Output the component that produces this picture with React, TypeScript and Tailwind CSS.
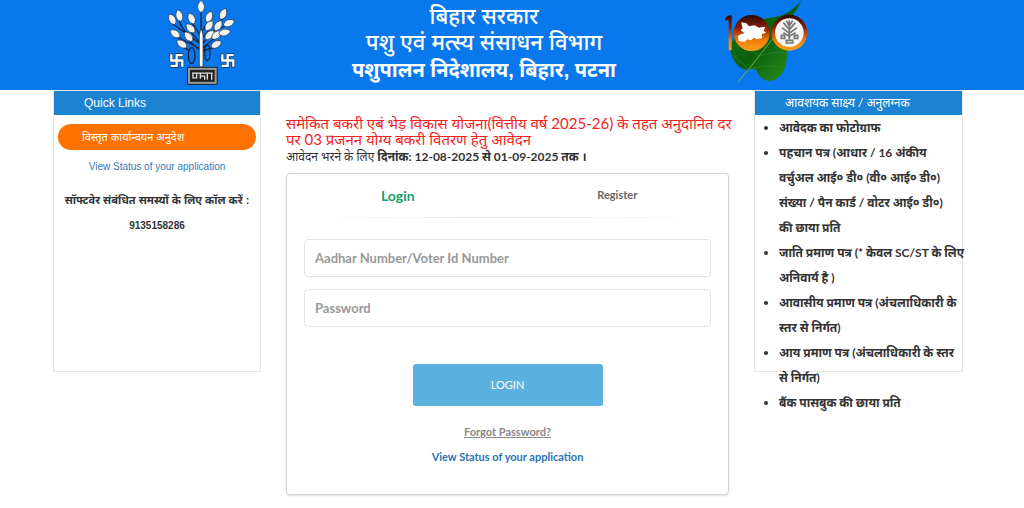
import React from 'react';

const LEAVES = [
  [152, 20, 0], [87, 47, -15], [66, 58, -28], [124, 56, -25], [176, 51, 22], [218, 42, 25],
  [235, 69, 68], [176, 77, 35], [203, 77, 35], [121, 85, -45], [75, 101, -55], [115, 110, -40],
  [177, 105, 45], [198, 105, 50], [222, 97, 78], [95, 132, -55], [197, 133, 60],
];

const DOCUMENTS = [
  ['आवेदक का फोटोग्राफ'],
  ['पहचान पत्र (आधार / 16 अंकीय', 'वर्चुअल आई० डी० (वी० आई० डी०)', 'संख्या / पैन कार्ड / वोटर आई० डी०)', 'की छाया प्रति'],
  ['जाति प्रमाण पत्र (* केवल SC/ST के लिए', 'अनिवार्य है )'],
  ['आवासीय प्रमाण पत्र (अंचलाधिकारी के', 'स्तर से निर्गत)'],
  ['आय प्रमाण पत्र (अंचलाधिकारी के स्तर', 'से निर्गत)'],
  ['बैंक पासबुक की छाया प्रति'],
];

const Swastik: React.FC<{ x: number }> = ({ x }) => (
  <g transform={`translate(${x} 160)`} fill="none">
    <path d="M5 0V21H38V42M40 5H21V37H2" stroke="#18304f" strokeWidth="11" />
    <path d="M5 2V21H38V40M39 5H21V37H3" stroke="#fff" strokeWidth="7" />
  </g>
);

const BiharEmblem: React.FC = () => (
  <svg viewBox="50 0 210 260" className="h-[87px] w-[70px]" aria-hidden="true">
    <g fill="none" stroke="#17263c" strokeWidth="4">
      <path d="M152 35V130M87 60Q90 90 148 130M66 70L104 98M124 68Q144 90 150 112M75 108L148 145M121 95L150 128M115 120L145 148" />
      <path d="M176 62L155 92M218 55Q190 95 155 132M235 73L190 92M176 90L155 114M222 100Q180 120 156 145M197 139L158 152M95 138L115 150" />
      <ellipse cx="124" cy="166" rx="10" ry="24" />
      <ellipse cx="171" cy="158" rx="8" ry="23" />
    </g>
    <path d="M147 200V105L152 82L158 105V200Z" fill="#fff" stroke="#17263c" strokeWidth="2" />
    {LEAVES.map(([x, y, turn]) => (
      <path
        key={`${x}-${y}`}
        d="M0 -19C13 -9 14 9 0 17C-14 9 -13 -9 0 -19Z"
        transform={`translate(${x} ${y}) rotate(${turn})`}
        fill="#f4f4f1"
        stroke="#24364d"
        strokeWidth="2"
      />
    ))}
    <Swastik x={58} />
    <Swastik x={211} />
    <rect x="110" y="200" width="92" height="54" fill="#222" />
    <rect x="116" y="206" width="80" height="42" fill="none" stroke="#9a9a9a" strokeWidth="6" />
    <path d="M125 219H187M128 219V233H139V221M150 220V236M151 228H163V239M171 220V238M184 220V239" fill="none" stroke="#ddd" strokeWidth="4" />
  </svg>
);

const CentenaryLogo: React.FC = () => (
  <svg viewBox="24 0 252 250" className="h-[84px] w-[84px]" aria-hidden="true">
    <defs>
      <linearGradient id="ring" x1="0" y1="0" x2="0" y2="1">
        <stop offset="0" stopColor="#2b0805" />
        <stop offset="0.35" stopColor="#8c1d0a" />
        <stop offset="0.7" stopColor="#f07a08" />
        <stop offset="1" stopColor="#ffa21a" />
      </linearGradient>
      <linearGradient id="leaf" x1="0" y1="0" x2="1" y2="1">
        <stop offset="0" stopColor="#187516" />
        <stop offset="0.5" stopColor="#0c5f10" />
        <stop offset="1" stopColor="#2b9a18" />
      </linearGradient>
    </defs>
    <path d="M257 0Q245 28 225 52C238 80 222 110 213 150C215 190 205 228 172 240C145 247 124 225 122 210Q108 202 97 210C70 206 48 185 42 145C55 90 100 60 165 52Q215 48 257 0Z" fill="url(#leaf)" />
    <path d="M225 50Q165 120 98 207L67 244" fill="none" stroke="#77a94c" strokeWidth="3" />
    <path d="M98 207Q82 190 50 165M98 207Q155 190 205 200M128 168Q110 150 90 145M130 167Q175 150 210 158" fill="none" stroke="#2c8b27" strokeWidth="2" />
    <path d="M28 52L39 45H47V150H38V59L28 61Z" fill="url(#ring)" />
    <circle cx="107" cy="98" r="54" fill="url(#ring)" />
    <path d="M75 66L91 69L99 78L116 75L128 82L148 79L143 91L150 97L137 101L139 113L123 117L114 112L104 120L94 117L86 125L68 122L65 108L75 101L86 99L74 90L80 84Z" fill="#fff" />
    <circle cx="220" cy="97" r="54" fill="url(#ring)" />
    <circle cx="220" cy="97" r="43" fill="#f5f5f5" />
    <g fill="none" stroke="#777" strokeWidth="5">
      <path d="M220 60V118M220 88L202 67M220 88L238 67M220 99L198 82M220 99L243 82M220 108L202 97M220 108L239 97M211 61L219 76M230 61L221 76" />
      <path d="M196 105H206V114H196ZM235 105H245V114H235ZM211 120H230V128H211Z" />
    </g>
  </svg>
);

const PanelTitle: React.FC<{ children: React.ReactNode }> = ({ children }) => (
  <h2 className="h-6 bg-[#1b83d1] px-[30px] text-xs leading-6 whitespace-nowrap text-white">{children}</h2>
);

const App: React.FC = () => {
  return (
    <div className="min-h-screen bg-white font-['Liberation_Sans','Noto_Sans_Devanagari','Noto_Sans',sans-serif] text-[#333]">
      <header className="grid h-[90px] grid-cols-3 justify-items-center bg-[#0a78ed] pr-[117px] pl-[61px]">
        <BiharEmblem />
        <div className="flex flex-col items-center pt-1 whitespace-nowrap text-white">
          <p className="text-[22px] leading-[26px] font-medium">बिहार सरकार</p>
          <p className="text-[22px] leading-[26px] font-medium">पशु एवं मत्स्य संसाधन विभाग</p>
          <p className="text-xl leading-7 font-bold">पशुपालन निदेशालय, बिहार, पटना</p>
        </div>
        <CentenaryLogo />
      </header>

      <main className="grid grid-cols-[208fr_443fr_209fr] items-start gap-[25px] pr-[61px] pl-[53px]">
        <aside className="h-[282px] min-w-0 border border-[#e6e6e6]">
          <PanelTitle>Quick Links</PanelTitle>
          <div className="flex flex-col px-1 pt-[9px] text-[11px]">
            <button type="button" className="h-[26px] rounded-full bg-[#ff7200] px-6 text-left text-white">विस्तृत कार्यान्वयन अनुदेश</button>
            <a href="#status" className="mt-[9px] text-center text-[10px] leading-4 text-[#337ab7]">View Status of your application</a>
            <p className="mt-3 text-center leading-[26px] font-bold whitespace-nowrap">सॉफ्टवेर संबंधित समस्यों के लिए कॉल करें :</p>
            <p className="text-center text-[10px] leading-[26px] font-bold">9135158286</p>
          </div>
        </aside>

        <section className="min-w-0 pt-[25px] font-['Lato','Noto_Sans_Devanagari',sans-serif]">
          <h1 className="text-[15px] leading-4 text-[#f52222]">
            <span className="whitespace-nowrap">समेकित बकरी एबं भेड़ विकास योजना(वित्तीय वर्ष 2025-26) के तहत अनुदानित दर</span>
            <br />
            पर 03 प्रजनन योग्य बकरी वितरण हेतु आवेदन
          </h1>
          <p className="text-xs leading-5">
            आवेदन भरने के लिए <strong>दिनांक: 12-08-2025 से 01-09-2025 तक ।</strong>
          </p>

          <form className="mt-1.5 flex h-[322px] flex-col rounded-sm border border-[#d3d3d6] px-[17px] shadow-sm" onSubmit={e => e.preventDefault()}>
            <div className="grid h-[43px] grid-cols-2 font-bold">
              <button type="button" className="pr-4 text-sm text-[#11a168]">Login</button>
              <button type="button" className="pl-4 text-[11px] text-[#666]">Register</button>
            </div>
            <div className="mx-4 h-px bg-linear-to-r from-transparent via-[#e2e2e2] to-transparent" />
            <div className="mt-[21px] flex flex-col gap-3">
              <input aria-label="Aadhar Number/Voter Id Number" placeholder="Aadhar Number/Voter Id Number" className="h-[38px] rounded-sm border border-[#e3e3e3] px-2.5 text-[13px] font-bold placeholder:text-[#999]" />
              <input type="password" aria-label="Password" placeholder="Password" className="h-[38px] rounded-sm border border-[#e3e3e3] px-2.5 text-[13px] font-bold placeholder:text-[#999]" />
            </div>
            <button type="submit" className="mx-auto mt-[37px] h-[42px] w-[190px] rounded-[3px] bg-[#5ab0df] text-[11px] text-white">LOGIN</button>
            <div className="mt-[13px] flex flex-col items-center text-[11px] leading-[25px] font-bold">
              <a href="#forgot" className="text-[#888] underline">Forgot Password?</a>
              <a href="#status" className="text-[#2a72b5]">View Status of your application</a>
            </div>
          </form>
        </section>

        <aside className="h-[282px] min-w-0 border border-[#e6e6e6] font-['Lato','Noto_Sans_Devanagari',sans-serif]">
          <PanelTitle>आवशयक साक्ष्य / अनुलग्नक</PanelTitle>
          <ul className="list-disc pl-6 text-xs leading-[25px] font-bold whitespace-nowrap">
            {DOCUMENTS.map(lines => (
              <li key={lines[0]}>
                {lines.map(line => <span key={line} className="block">{line}</span>)}
              </li>
            ))}
          </ul>
        </aside>
      </main>
    </div>
  );
};

export default App;
